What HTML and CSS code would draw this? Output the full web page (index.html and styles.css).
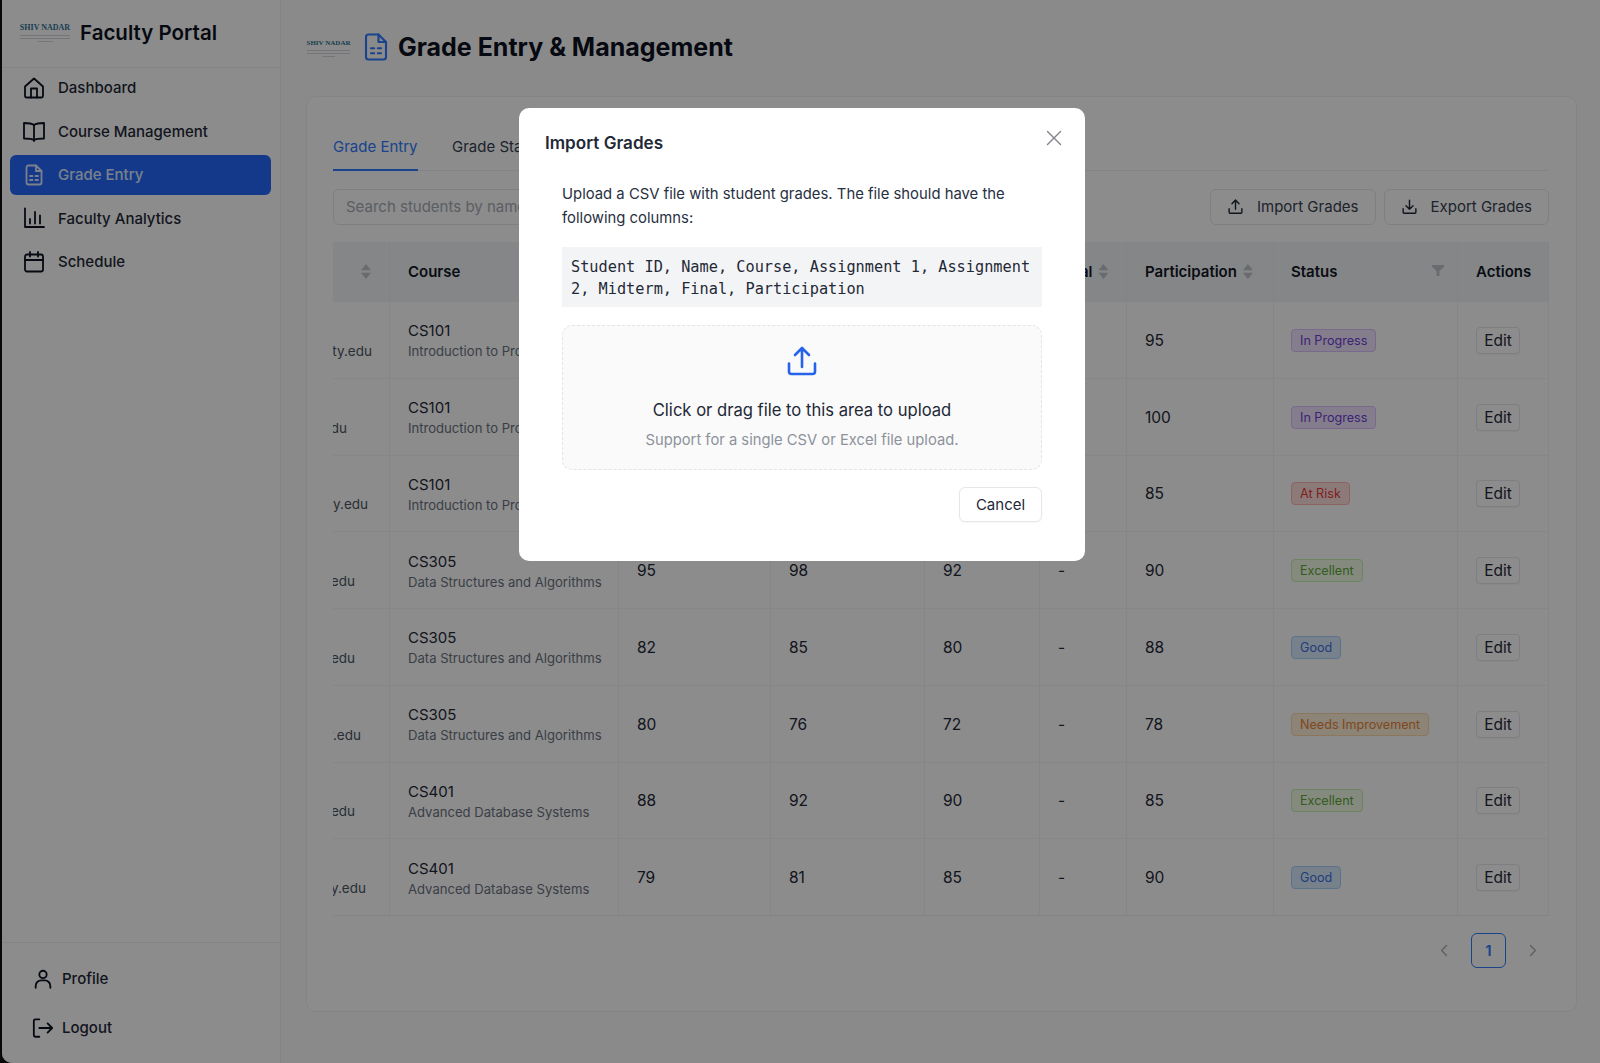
FILE: index.html
```html
<!DOCTYPE html>
<html lang="en">
<head>
<meta charset="utf-8">
<title>Grade Entry &amp; Management</title>
<link rel="stylesheet" href="styles.css">
</head>
<body>
<div class="app">
  <aside class="sidebar">
    <div class="brand">
      <div class="logo"><span class="logo-name">SHIV NADAR</span><i class="logo-line"></i><i class="logo-line"></i><i class="logo-line short"></i></div>
      <span class="brand-title">Faculty Portal</span>
    </div>
    <nav class="nav">
      <a class="nav-item"><svg class="ico" viewBox="0 0 24 24"><path d="M3 10.500 12 2.500l9 8V20a1.500 1.500 0 0 1-1.500 1.500h-15A1.500 1.500 0 0 1 3 20z"/><path d="M9 21.500V12.500h6v9"/></svg>Dashboard</a>
      <a class="nav-item"><svg class="ico" viewBox="0 0 24 24"><path d="M12 6C10 4.500 6 4 2 4v15.500c4 0 8 .2 10 1.500 2-1.300 6-1.500 10-1.500V4c-4 0-8 .5-10 2z"/><path d="M12 6v16"/></svg>Course Management</a>
      <a class="nav-item active"><svg class="ico" viewBox="0 0 24 24"><path d="M14 2.500H6.500a2 2 0 0 0-2 2v15a2 2 0 0 0 2 2h11a2 2 0 0 0 2-2V8z"/><path d="M14 2.500V8h5.500"/><path d="M8 13h2.500M13.500 13H16M8 17h2.500M13.500 17H16"/></svg>Grade Entry</a>
      <a class="nav-item"><svg class="ico" viewBox="0 0 24 24"><path d="M3 2.500V21h19"/><path d="M8 13v4.500M13 6v11.500M18 9.500v8"/></svg>Faculty Analytics</a>
      <a class="nav-item"><svg class="ico" viewBox="0 0 24 24"><rect x="3" y="4.500" width="18" height="17" rx="2"/><path d="M3 10h18M8 2v4.500M16 2v4.500"/></svg>Schedule</a>
    </nav>
    <div class="side-foot">
      <a class="foot-item"><svg class="ico ico-foot" viewBox="0 0 24 24"><circle cx="12" cy="7" r="4"/><path d="M4 21.500v-2a6 6 0 0 1 6-6h4a6 6 0 0 1 6 6v2"/></svg>Profile</a>
      <a class="foot-item"><svg class="ico ico-foot" viewBox="0 0 24 24"><path d="M8 2.500H3.500A1.500 1.500 0 0 0 2 4v16a1.500 1.500 0 0 0 1.500 1.500H8"/><path d="M8 12h14M17 7l5 5-5 5"/></svg>Logout</a>
    </div>
  </aside>

  <main class="main">
    <header class="page-head">
      <div class="logo logo-small"><span class="logo-name">SHIV NADAR</span><i class="logo-line"></i><i class="logo-line"></i><i class="logo-line short"></i></div>
      <svg class="page-ico" viewBox="0 0 24 24"><path d="M14 2H6a2 2 0 0 0-2 2v16a2 2 0 0 0 2 2h12a2 2 0 0 0 2-2V8z"/><path d="M14 2v6h6"/><path d="M8 13h2.500M13.500 13H16M8 17h2.500M13.500 17H16"/></svg>
      <h1 class="page-title">Grade Entry &amp; Management</h1>
    </header>

    <section class="card">
      <div class="tabs">
        <a class="tab tab-on">Grade Entry</a>
        <a class="tab">Grade Statistics</a>
      </div>
      <div class="toolbar">
        <div class="search">Search students by name or ID</div>
        <div class="tool-btns">
          <button class="btn"><svg class="btn-ico" viewBox="0 0 24 24"><path d="M3 15v5a1.500 1.500 0 0 0 1.500 1.500h15A1.500 1.500 0 0 0 21 20v-5"/><path d="M12 16V3M7 8l5-5 5 5"/></svg>Import Grades</button>
          <button class="btn"><svg class="btn-ico" viewBox="0 0 24 24"><path d="M3 15v5a1.500 1.500 0 0 0 1.500 1.500h15A1.500 1.500 0 0 0 21 20v-5"/><path d="M12 3v13M7 11l5 5 5-5"/></svg>Export Grades</button>
        </div>
      </div>

      <div class="grid">
        <div class="th th-end"><i class="sort"></i></div>
        <div class="th">Course</div>
        <div class="th">Assignment 1</div>
        <div class="th">Assignment 2</div>
        <div class="th">Midterm</div>
        <div class="th">Final<i class="sort"></i></div>
        <div class="th">Participation<i class="sort"></i></div>
        <div class="th th-between">Status<i class="funnel"></i></div>
        <div class="th">Actions</div>

        <div class="td td-mail"><span class="mail e17">john.smith@university.edu</span></div>
        <div class="td"><div class="c-code">CS101</div><div class="c-name">Introduction to Programming</div></div>
        <div class="td">85</div><div class="td">90</div><div class="td">88</div><div class="td">-</div><div class="td">95</div>
        <div class="td td-status"><span class="tag t-purple">In Progress</span></div><div class="td"><button class="edit">Edit</button></div>

        <div class="td td-mail"><span class="mail e42">emma.jones@university.edu</span></div>
        <div class="td"><div class="c-code">CS101</div><div class="c-name">Introduction to Programming</div></div>
        <div class="td">92</div><div class="td">88</div><div class="td">95</div><div class="td">-</div><div class="td">100</div>
        <div class="td td-status"><span class="tag t-purple">In Progress</span></div><div class="td"><button class="edit">Edit</button></div>

        <div class="td td-mail"><span class="mail e21">alex.brown@university.edu</span></div>
        <div class="td"><div class="c-code">CS101</div><div class="c-name">Introduction to Programming</div></div>
        <div class="td">65</div><div class="td">58</div><div class="td">62</div><div class="td">-</div><div class="td">85</div>
        <div class="td td-status"><span class="tag t-red">At Risk</span></div><div class="td"><button class="edit">Edit</button></div>

        <div class="td td-mail"><span class="mail e34">sara.wilson@university.edu</span></div>
        <div class="td"><div class="c-code">CS305</div><div class="c-name">Data Structures and Algorithms</div></div>
        <div class="td">95</div><div class="td">98</div><div class="td">92</div><div class="td">-</div><div class="td">90</div>
        <div class="td td-status"><span class="tag t-green">Excellent</span></div><div class="td"><button class="edit">Edit</button></div>

        <div class="td td-mail"><span class="mail e34">mike.davis@university.edu</span></div>
        <div class="td"><div class="c-code">CS305</div><div class="c-name">Data Structures and Algorithms</div></div>
        <div class="td">82</div><div class="td">85</div><div class="td">80</div><div class="td">-</div><div class="td">88</div>
        <div class="td td-status"><span class="tag t-blue">Good</span></div><div class="td"><button class="edit">Edit</button></div>

        <div class="td td-mail"><span class="mail e28">lisa.clark@university.edu</span></div>
        <div class="td"><div class="c-code">CS305</div><div class="c-name">Data Structures and Algorithms</div></div>
        <div class="td">80</div><div class="td">76</div><div class="td">72</div><div class="td">-</div><div class="td">78</div>
        <div class="td td-status"><span class="tag t-orange">Needs Improvement</span></div><div class="td"><button class="edit">Edit</button></div>

        <div class="td td-mail"><span class="mail e34">tom.harris@university.edu</span></div>
        <div class="td"><div class="c-code">CS401</div><div class="c-name">Advanced Database Systems</div></div>
        <div class="td">88</div><div class="td">92</div><div class="td">90</div><div class="td">-</div><div class="td">85</div>
        <div class="td td-status"><span class="tag t-green">Excellent</span></div><div class="td"><button class="edit">Edit</button></div>

        <div class="td td-mail"><span class="mail e23">anna.lewis@university.edu</span></div>
        <div class="td"><div class="c-code">CS401</div><div class="c-name">Advanced Database Systems</div></div>
        <div class="td">79</div><div class="td">81</div><div class="td">85</div><div class="td">-</div><div class="td">90</div>
        <div class="td td-status"><span class="tag t-blue">Good</span></div><div class="td"><button class="edit">Edit</button></div>
      </div>

      <div class="pager">
        <svg class="chev" viewBox="0 0 10 16"><path d="M8 2 2 8l6 6"/></svg>
        <span class="page-num">1</span>
        <svg class="chev" viewBox="0 0 10 16"><path d="m2 2 6 6-6 6"/></svg>
      </div>
    </section>
  </main>
</div>

<div class="overlay">
  <div class="modal">
    <svg class="close" viewBox="0 0 16 16"><path d="m1.500 1.500 13 13M14.500 1.500l-13 13"/></svg>
    <h2 class="modal-title">Import Grades</h2>
    <div class="modal-body">
      <p class="lead">Upload a CSV file with student grades. The file should have the following columns:</p>
      <pre class="code">Student ID, Name, Course, Assignment 1, Assignment
2, Midterm, Final, Participation</pre>
      <div class="drop">
        <svg class="drop-ico" viewBox="0 0 30 30"><path d="M2 17.500v8A2.500 2.500 0 0 0 4.500 28h21a2.500 2.500 0 0 0 2.500-2.500v-8"/><path d="M15 21V2M8 9 15 2l7 7"/></svg>
        <div class="drop-main">Click or drag file to this area to upload</div>
        <div class="drop-sub">Support for a single CSV or Excel file upload.</div>
      </div>
      <div class="modal-foot"><button class="cancel">Cancel</button></div>
    </div>
  </div>
</div>
</body>
</html>
```
FILE: styles.css
```css
* { box-sizing: border-box; }
html, body { margin: 0; height: 100%; }
body { background: #111; font-family: Inter, "Noto Sans", "Liberation Sans", sans-serif; color: #111827; overflow: hidden; }
.app { display: flex; height: 1063px; margin-left: 2px; background: #fbfbfc; border-bottom-left-radius: 10px; overflow: hidden; }

.sidebar { width: 279px; flex: none; display: flex; flex-direction: column; background: #fff; border-right: 1px solid #eceef1; }
.brand { height: 68px; flex: none; display: flex; align-items: center; gap: 10px; padding: 0 0 2px 18px; border-bottom: 1px solid #f0f1f3; }
.logo { width: 50px; display: flex; flex-direction: column; align-items: center; gap: 2px; }
.logo-name { font: 700 8px/10px "Liberation Serif", serif; color: #2f7394; white-space: nowrap; }
.logo-line { display: block; width: 100%; height: 1px; background: #d3d6da; }
.logo-line.short { width: 30%; }
.logo-small { width: 43px; margin-top: 1px; margin-left: 1px; margin-right: -1px; }
.logo-small .logo-name { font-size: 7px; }
.brand-title { font-size: 20.500px; font-weight: 600; color: #0b1220; }

.nav { flex: 1; display: flex; flex-direction: column; gap: 3.500px; padding: 0 9px 0 8px; }
.nav-item { height: 40px; display: flex; align-items: center; gap: 12px; padding: 0 0 1px 12px; font-size: 15px; font-weight: 500; border-radius: 6px; color: #1f2937; }
.nav-item.active { background: #2569fd; color: #dfe9ff; }
.ico { width: 24px; height: 24px; flex: none; fill: none; stroke: #0b1220; stroke-width: 1.800; stroke-linecap: round; stroke-linejoin: round; }
.active .ico { stroke: #dfe9ff; }
.ico-foot { width: 22px; height: 22px; stroke-width: 2; }
.side-foot { border-top: 1px solid #f0f1f3; height: 121px; padding: 15px 0 0 30px; display: flex; flex-direction: column; gap: 8px; }
.foot-item { height: 41px; display: flex; align-items: center; gap: 8px; font-size: 15px; font-weight: 500; color: #1f2937; }

.main { flex: 1; min-width: 0; padding: 0 23px 0 25px; display: flex; flex-direction: column; }
.page-head { height: 96px; flex: none; display: flex; align-items: center; padding-bottom: 3px; }
.page-ico { width: 30px; height: 30px; margin-left: 12px; fill: none; stroke: #2f7bff; stroke-width: 1.700; stroke-linecap: round; stroke-linejoin: round; }
.page-title { margin: 0 0 0 7px; font-size: 25px; font-weight: 700; color: #0b1220; }

.card { height: 916px; flex: none; background: #fff; border: 1px solid #f0f1f3; border-radius: 10px; padding: 0 27px 0 26px; display: flex; flex-direction: column; }
.tabs { margin-top: 39px; height: 35px; flex: none; display: flex; gap: 34.500px; border-bottom: 1px solid #f0f1f3; }
.tab { font-size: 15px; line-height: 22px; height: 35px; color: #374151; }
.tab-on { color: #2f7bff; border-bottom: 2px solid #2f7bff; }
.toolbar { margin-top: 18px; height: 36px; flex: none; display: flex; justify-content: space-between; }
.search { width: 420px; height: 36px; border: 1px solid #e5e7eb; border-radius: 6px; padding: 0 12px; font-size: 15px; line-height: 34px; color: #a6acb5; }
.tool-btns { display: flex; gap: 8px; }
.btn { width: 165.500px; height: 36px; display: flex; align-items: center; justify-content: center; gap: 13px; padding: 0 0 2px; background: #fff; border: 1px solid #e5e7eb; border-radius: 6px; font: inherit; font-size: 15px; color: #374151; }
.btn-ico { width: 17px; height: 17px; fill: none; stroke: #1f2937; stroke-width: 2; stroke-linecap: round; stroke-linejoin: round; }

.grid { margin-top: 17px; display: grid; grid-template-columns: 57px 229px 152px 154px 115px 87px 147px 184px 91px; grid-template-rows: 59px repeat(8, 76.750px); border-bottom: 1px solid #f0f1f3; flex: none; }
.th { background: #f3f4f6; display: flex; align-items: center; padding-left: 18px; font-size: 15px; font-weight: 600; color: #111827; white-space: nowrap; border-right: 1px solid #eceef1; overflow: hidden; }
.th:last-of-type { border-right: 0; }
.th-end { justify-content: flex-end; padding: 0 18px 0 0; }
.th-between { justify-content: space-between; padding: 0 13px 0 17px; }
.td { display: flex; flex-direction: column; justify-content: center; align-items: flex-start; padding: 1px 0 0 18px; border-right: 1px solid #f3f4f6; border-top: 1px solid #f3f4f6; font-size: 15.500px; color: #1f2937; overflow: hidden; white-space: nowrap; }
.td-status { padding-left: 17px; }
.td-mail { align-items: flex-end; padding: 22px 0 0; }
.mail { font-size: 13.500px; color: #4b5563; }
.e17 { margin-right: 17px; } .e42 { margin-right: 42px; } .e21 { margin-right: 21px; } .e34 { margin-right: 34px; } .e28 { margin-right: 28px; } .e23 { margin-right: 23px; }
.c-code { margin-top: 1px; font-size: 15px; line-height: 22px; color: #1f2937; }
.c-name { font-size: 13.100px; line-height: 19px; color: #6b7280; }
.sort { display: inline-block; width: 10px; height: 15px; margin-left: 6px; flex: none; background: #c0c4ca; clip-path: polygon(50% 0, 100% 42%, 0 42%, 0 58%, 100% 58%, 50% 100%, 0 58%, 0 42%); }
.funnel { width: 12px; height: 11px; margin-bottom: 2px; flex: none; background: #c0c4ca; clip-path: polygon(0 0, 100% 0, 100% 15%, 62% 55%, 62% 100%, 38% 100%, 38% 55%, 0 15%); }
.tag { height: 23px; padding: 0 8px; border: 1px solid; border-radius: 4px; font-size: 12.600px; line-height: 21px; }
.t-purple { background: #f0e4ff; border-color: #dcc0ff; color: #6f3fd8; }
.t-red { background: #ffdedd; border-color: #ffb5b0; color: #e83a3a; }
.t-green { background: #f0fce4; border-color: #c8eeb0; color: #5fa83a; }
.t-blue { background: #d8ecff; border-color: #a8d0ff; color: #3f6fe0; }
.t-orange { background: #fff0d8; border-color: #ffd8a8; color: #e8843a; }
.edit { width: 44px; height: 27px; padding: 0; background: #fff; border: 1px solid #e5e7eb; border-radius: 4px; font: inherit; font-size: 15.500px; color: #1f2937; box-shadow: 0 1px 1px rgba(0,0,0,.03); }

.pager { margin-top: 17px; display: flex; justify-content: flex-end; align-items: center; gap: 22px; padding-right: 11px; }
.chev { width: 10px; height: 13px; fill: none; stroke: #b0b4bb; stroke-width: 1.800; stroke-linecap: round; stroke-linejoin: round; }
.page-num { width: 35px; height: 35px; border: 1px solid #2f7bff; border-radius: 6px; text-align: center; font-size: 15px; font-weight: 600; line-height: 33px; color: #2f7bff; }

.overlay { position: fixed; inset: 0; background: rgba(0,0,0,.45); }
.modal { position: absolute; left: 519px; top: 108px; width: 566px; height: 453px; background: #fff; border-radius: 10px; padding: 24px 27px 0 26px; }
.close { position: absolute; right: 23px; top: 22px; width: 16px; height: 16px; fill: none; stroke: #7f848c; stroke-width: 1.400; stroke-linecap: round; }
.modal-title { margin: 0; font-size: 17.100px; line-height: 22px; font-weight: 600; color: #1f2937; }
.modal-body { padding: 0 16px 0 17px; }
.lead { margin: 29px 0 0; font-size: 14.850px; line-height: 23.500px; color: #27303f; }
.code { margin: 17px 0 0; height: 60px; padding: 9px 9px 0; background: #f3f4f6; font: 15.250px/22px "DejaVu Sans Mono", "Liberation Mono", monospace; color: #1f2937; white-space: pre; overflow: hidden; }
.drop { margin-top: 18px; height: 145px; background: #fafafa; border: 1px dashed #e2e4e8; border-radius: 10px; display: flex; flex-direction: column; align-items: center; }
.drop-ico { width: 30px; height: 30px; margin-top: 19.500px; fill: none; stroke: #2563eb; stroke-width: 2.600; stroke-linecap: round; stroke-linejoin: round; }
.drop-main { margin-top: 22.500px; font-size: 16.600px; line-height: 24px; color: #1f2937; }
.drop-sub { margin-top: 6px; font-size: 14.750px; line-height: 24px; color: #8d929b; }
.modal-foot { margin-top: 17px; display: flex; justify-content: flex-end; }
.cancel { width: 83px; height: 35px; background: #fff; border: 1px solid #e5e7eb; border-radius: 6px; font: inherit; font-size: 15px; color: #1f2937; box-shadow: 0 1px 2px rgba(0,0,0,.04); }
```
